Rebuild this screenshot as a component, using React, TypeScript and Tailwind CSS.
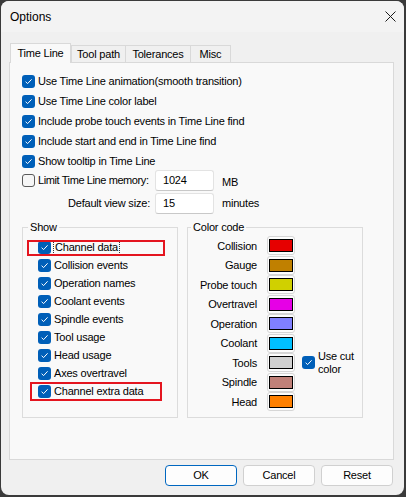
import React from "react";

function Box({ checked = true }: { checked?: boolean }) {
  return checked ? (
    <span className="w-[13px] h-[13px] rounded-[3px] bg-[#005fb8] flex items-center justify-center shrink-0">
      <svg width="9" height="9" viewBox="0 0 9 9">
        <path d="M1.6 4.7 L3.6 6.6 L7.6 2.3" stroke="#ffffff" strokeWidth="1" fill="none" />
      </svg>
    </span>
  ) : (
    <span className="w-[13px] h-[13px] rounded-[3px] border border-[#5a5a5a] bg-[#f6f6f6] shrink-0" />
  );
}

const topRows = [
  "Use Time Line animation(smooth transition)",
  "Use Time Line color label",
  "Include probe touch events in Time Line find",
  "Include start and end in Time Line find",
  "Show tooltip in Time Line",
];

const showRows = [
  "Channel data",
  "Collision events",
  "Operation names",
  "Coolant events",
  "Spindle events",
  "Tool usage",
  "Head usage",
  "Axes overtravel",
  "Channel extra data",
];

const colors: [string, string][] = [
  ["Collision", "#e60000"],
  ["Gauge", "#c08000"],
  ["Probe touch", "#d0d000"],
  ["Overtravel", "#e600e6"],
  ["Operation", "#8080ff"],
  ["Coolant", "#00c0ff"],
  ["Tools", "#d0d0d0"],
  ["Spindle", "#c08078"],
  ["Head", "#ff8000"],
];

export default function App() {
  return (
    <div className="w-[406px] h-[497px] bg-[#3a3a3a] pl-px pt-px font-['Liberation_Sans',Arial,sans-serif] text-[11px] tracking-[-0.2px] text-black overflow-hidden">
      <div className="w-[403px] h-[494px] rounded-lg bg-[#f0f0f0] flex flex-col overflow-hidden">
        {/* Title bar */}
        <div className="h-[31px] bg-[#f3f3f3] flex items-center justify-between pl-[9px] pr-[8px]">
          <span className="text-[12px] tracking-normal">Options</span>
          <svg width="11" height="11" viewBox="0 0 11 11">
            <path d="M0.5 0.5 L10.5 10.5 M10.5 0.5 L0.5 10.5" stroke="#1a1a1a" strokeWidth="1" />
          </svg>
        </div>

        <div className="px-[8px] flex flex-col">
          {/* Tabs */}
          <div className="mt-[11px] h-[20px] flex items-end relative z-10 -mb-px">
            <div className="ml-[1px] w-[61px] h-[20px] border border-b-0 border-[#d9d9d9] bg-[#f9f9f9] flex items-center justify-center pb-[1px]">
              Time Line
            </div>
            <div className="w-[55px] h-[18px] border border-[#d9d9d9] bg-[#f0f0f0] flex items-center justify-center">
              Tool path
            </div>
            <div className="-ml-px w-[66px] h-[18px] border border-[#d9d9d9] bg-[#f0f0f0] flex items-center justify-center">
              Tolerances
            </div>
            <div className="-ml-px w-[41px] h-[18px] border border-[#d9d9d9] bg-[#f0f0f0] flex items-center justify-center">
              Misc
            </div>
          </div>

          {/* Panel */}
          <div className="w-[385px] h-[398px] border border-[#d9d9d9] bg-[#f9f9f9] pt-[8px] pl-[12px] flex flex-col">
            {topRows.map((t) => (
              <div key={t} className="h-5 flex items-center gap-[3px]">
                <Box />
                <span>{t}</span>
              </div>
            ))}

            <div className="-mt-px grid grid-cols-[133px_59px_auto] gap-y-[2px] items-center">
              <div className="flex items-center gap-[3px] whitespace-nowrap">
                <Box checked={false} />
                <span className="tracking-[-0.4px]">Limit Time Line memory:</span>
              </div>
              <div className="h-[21px] bg-white border border-[#e3e3e3] border-b-[#c8c8c8] rounded-[3px] flex items-center pl-[7px]">
                1024
              </div>
              <span className="pl-[8px] pt-[3px]">MB</span>

              <div className="text-right pr-[5px] whitespace-nowrap">Default view size:</div>
              <div className="h-[21px] bg-white border border-[#e3e3e3] border-b-[#c8c8c8] rounded-[3px] flex items-center pl-[7px]">
                15
              </div>
              <span className="pl-[8px]">minutes</span>
            </div>

            <div className="mt-[7px] flex gap-[9px]">
              <fieldset className="w-[156px] h-[197px] border border-[#dcdcdc] pl-[15px]">
                <legend className="ml-[-10px] px-[2px] leading-[13px]">Show</legend>
                <div className="mt-[4px] flex flex-col">
                  {showRows.map((t, i) => (
                    <div key={t} className="relative h-[18px] flex items-center gap-[2px]">
                      <Box />
                      <span className={i === 0 ? "border border-dotted border-[#333] leading-[13px] px-px" : "px-px"}>
                        {t}
                      </span>
                      {i === 0 && (
                        <span className="absolute left-[-11px] top-[2px] w-[138px] h-[16px] border-2 border-[#e4151f] pointer-events-none" />
                      )}
                      {i === showRows.length - 1 && (
                        <span className="absolute left-[-8px] top-0 w-[132px] h-[19px] border-2 border-[#e4151f] pointer-events-none" />
                      )}
                    </div>
                  ))}
                </div>
              </fieldset>

              <fieldset className="w-[176px] h-[197px] border border-[#dcdcdc]">
                <legend className="ml-[3px] px-[2px] leading-[13px]">Color code</legend>
                <div className="mt-[2px] flex flex-col">
                  {colors.map(([name, c]) => (
                    <div key={name} className="h-[19.5px] flex items-center">
                      <span className="w-[69px] text-right">{name}</span>
                      <span className="ml-[10px] w-[28px] h-[19px] rounded-[3px] bg-[#fdfdfd] border border-[#d6d6d6] flex items-center justify-center shrink-0">
                        <span className="w-[24px] h-[13px] border border-black" style={{ backgroundColor: c }} />
                      </span>
                      {name === "Tools" && (
                        <span className="ml-[7px] flex items-center gap-[3px]">
                          <Box />
                          <span className="leading-[13px]">
                            Use cut
                            <br />
                            color
                          </span>
                        </span>
                      )}
                    </div>
                  ))}
                </div>
              </fieldset>
            </div>
          </div>

          {/* Buttons */}
          <div className="w-[385px] mt-[5px] flex justify-end gap-[6px] pr-px">
            <button className="w-[72px] h-[21px] rounded-[4px] bg-[#fdfdfd] border border-[#0067c0] flex items-center justify-center">
              OK
            </button>
            <button className="w-[72px] h-[21px] rounded-[4px] bg-[#fdfdfd] border border-[#d0d0d0] flex items-center justify-center">
              Cancel
            </button>
            <button className="w-[72px] h-[21px] rounded-[4px] bg-[#fdfdfd] border border-[#d0d0d0] flex items-center justify-center">
              Reset
            </button>
          </div>
        </div>
      </div>
    </div>
  );
}
